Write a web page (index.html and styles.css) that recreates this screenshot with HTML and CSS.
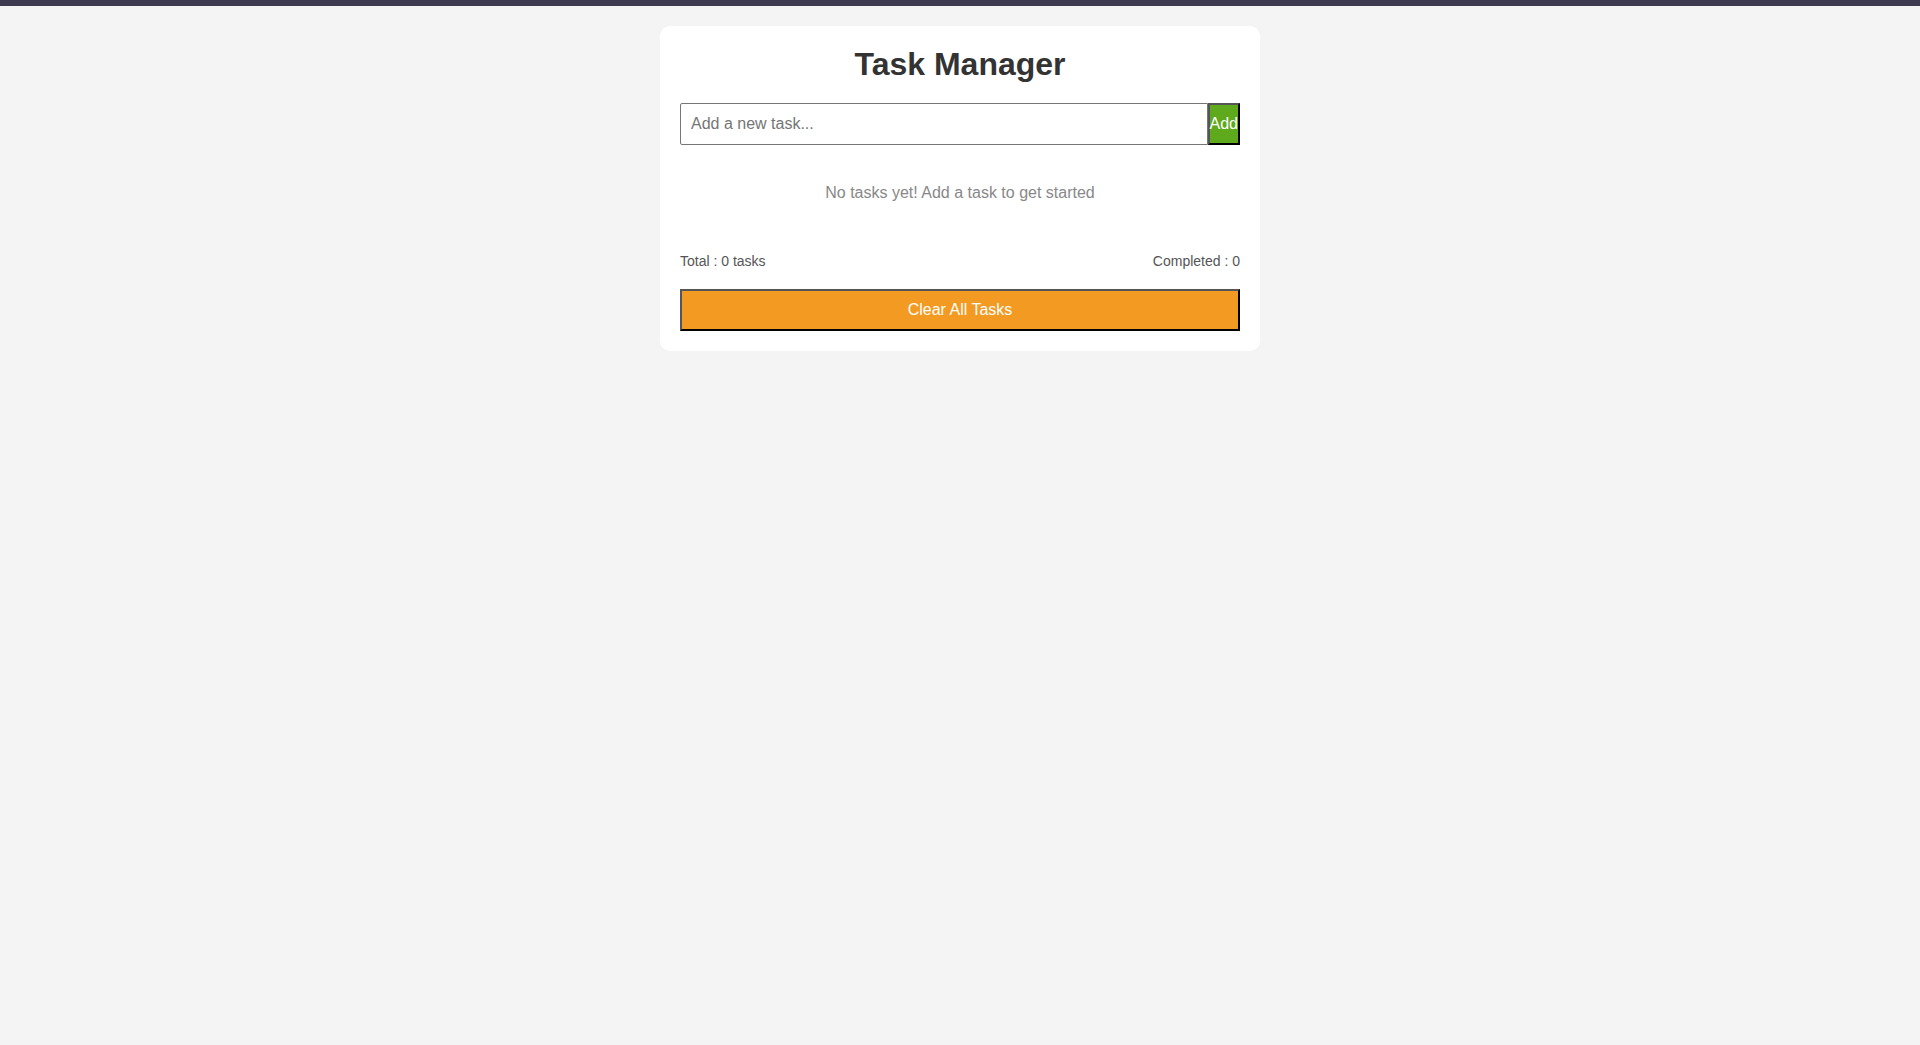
FILE: index.html
```html
<!DOCTYPE html>
<html lang="en">
<head>
<meta charset="UTF-8">
<title>Task Manager</title>
<link rel="stylesheet" href="styles.css">
</head>
<body>
<div class="topbar"></div>
<main class="card">
  <h1 class="title">Task Manager</h1>
  <div class="add-row">
    <input class="task-input" type="text" placeholder="Add a new task...">
    <button class="add-btn">Add</button>
  </div>
  <p class="empty">No tasks yet! Add a task to get started</p>
  <div class="stats">
    <span>Total : 0 tasks</span>
    <span>Completed : 0</span>
  </div>
  <button class="clear-btn">Clear All Tasks</button>
</main>
</body>
</html>
```
FILE: styles.css
```css
* { box-sizing: border-box; }
html, body { margin: 0; padding: 0; }
body {
  background: #f4f4f4;
  font-family: "Liberation Sans", Arial, sans-serif;
  min-height: 100vh;
}
.topbar {
  height: 6px;
  background: #3d3a50;
}
.card {
  width: 600px;
  margin: 20px auto 0;
  background: #fff;
  border-radius: 10px;
  padding: 20px;
}
.title {
  margin: 0 0 20px;
  text-align: center;
  font-size: 32px;
  line-height: 37px;
  color: #333;
  font-weight: bold;
}
.add-row {
  display: flex;
}
.task-input {
  flex: 1;
  height: 42px;
  padding: 10px;
  font-size: 16px;
  font-family: "Liberation Sans", Arial, sans-serif;
  border: 1px solid #767676;
  border-radius: 2px 0 0 2px;
  color: #333;
  outline: none;
}
.task-input::placeholder { color: #757575; }
.add-btn {
  height: 42px;
  padding: 0;
  background: #5fa91c;
  color: #fff;
  font-size: 16px;
  font-family: "Liberation Sans", Arial, sans-serif;
  border: 2px solid;
  border-color: #555 #000 #000 #555;
}
.empty {
  margin: 39px 0 0;
  text-align: center;
  color: #888;
  font-size: 16px;
  line-height: 18px;
}
.stats {
  margin-top: 51px;
  display: flex;
  justify-content: space-between;
  font-size: 14px;
  line-height: 17px;
  color: #555;
}
.clear-btn {
  display: block;
  width: 100%;
  margin-top: 19px;
  height: 42px;
  padding: 10px;
  background: #f29a22;
  color: #fff;
  font-size: 16px;
  font-family: "Liberation Sans", Arial, sans-serif;
  border: 2px solid;
  border-color: #555 #000 #000 #555;
}
```
